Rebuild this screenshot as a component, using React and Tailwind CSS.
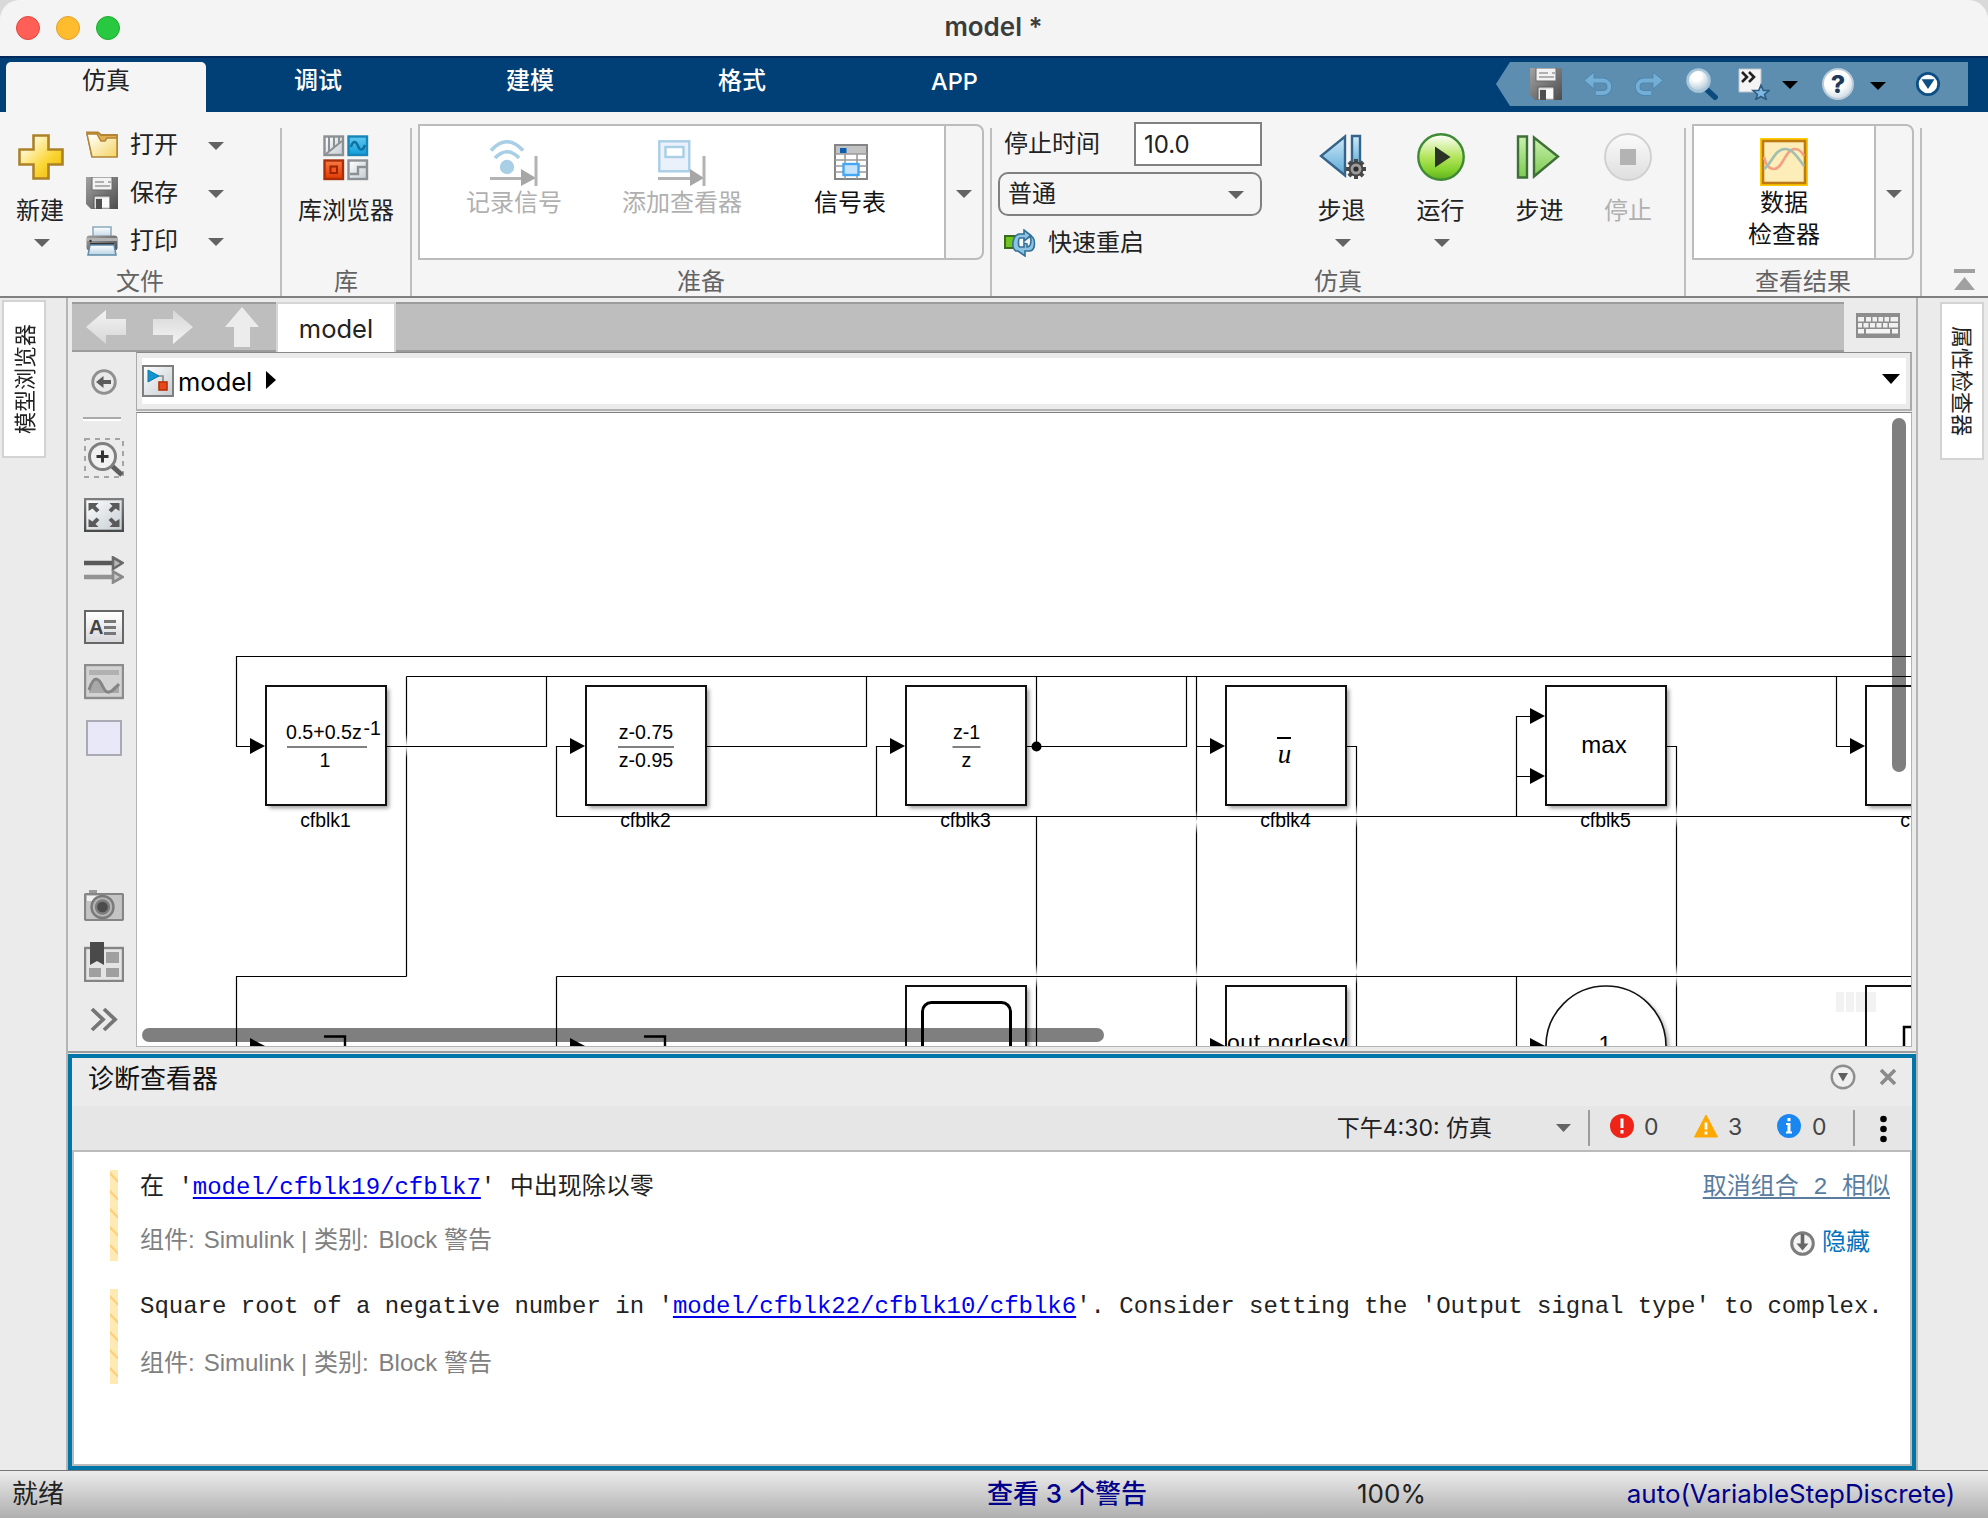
import React from "react";

const UI = "font-['Inter','Noto_Sans_CJK_SC',sans-serif]";

/* ---------- small helpers ---------- */
function Label({ className = "", children }) {
  return <div className={`flex h-7 items-center justify-center whitespace-nowrap leading-7 ${className}`}>{children}</div>;
}
function Caret({ className = "", color = "#636363", w = 16, h = 8 }) {
  return (
    <svg className={`shrink-0 ${className}`} width={w} height={h} viewBox="0 0 16 8" preserveAspectRatio="none">
      <path d="M0 0H16L8 8Z" fill={color} />
    </svg>
  );
}

/* ---------- icons ---------- */
function Defs() {
  return (
    <svg width="0" height="0" className="absolute">
      <defs>
        <linearGradient id="gold" x1="0" y1="0" x2="1" y2="1">
          <stop offset="0.15" stopColor="#fffbe8" />
          <stop offset="0.6" stopColor="#fbd737" />
          <stop offset="1" stopColor="#e8b200" />
        </linearGradient>
        <linearGradient id="folder" x1="0" y1="0" x2="1" y2="1">
          <stop offset="0.1" stopColor="#fffef5" />
          <stop offset="1" stopColor="#f3d35e" />
        </linearGradient>
        <linearGradient id="steel" x1="0" y1="0" x2="1" y2="1">
          <stop offset="0" stopColor="#a2a2a2" />
          <stop offset="1" stopColor="#4c4c4c" />
        </linearGradient>
        <linearGradient id="silver" x1="0" y1="0" x2="1" y2="1">
          <stop offset="0" stopColor="#ffffff" />
          <stop offset="1" stopColor="#c4ccd2" />
        </linearGradient>
        <linearGradient id="paper" x1="0" y1="0" x2="0" y2="1">
          <stop offset="0" stopColor="#ffffff" />
          <stop offset="1" stopColor="#b9d3e4" />
        </linearGradient>
        <linearGradient id="cyan" x1="0" y1="0" x2="0" y2="1">
          <stop offset="0" stopColor="#62c8f0" />
          <stop offset="1" stopColor="#0d9ddb" />
        </linearGradient>
        <linearGradient id="orange" x1="0" y1="0" x2="0" y2="1">
          <stop offset="0" stopColor="#f97a45" />
          <stop offset="1" stopColor="#e03a00" />
        </linearGradient>
        <linearGradient id="sky" x1="0" y1="0" x2="0" y2="1">
          <stop offset="0" stopColor="#cfe9f8" />
          <stop offset="1" stopColor="#5ba9d6" />
        </linearGradient>
        <linearGradient id="lime" x1="0" y1="0" x2="0" y2="1">
          <stop offset="0" stopColor="#c9f0b0" />
          <stop offset="1" stopColor="#7dcb50" />
        </linearGradient>
        <linearGradient id="run" x1="0" y1="0" x2="0" y2="1">
          <stop offset="0" stopColor="#ffffff" />
          <stop offset="0.5" stopColor="#b4e55c" />
          <stop offset="0.8" stopColor="#82d02c" />
          <stop offset="1" stopColor="#5fae20" />
        </linearGradient>
        <linearGradient id="stopg" x1="0" y1="0" x2="0" y2="1">
          <stop offset="0" stopColor="#fbfbfb" />
          <stop offset="1" stopColor="#dedede" />
        </linearGradient>
        <linearGradient id="ghost" x1="0" y1="0" x2="0" y2="1">
          <stop offset="0" stopColor="#f4f4f4" />
          <stop offset="1" stopColor="#d6d6d6" />
        </linearGradient>
        <linearGradient id="frame" x1="0" y1="0" x2="0" y2="1">
          <stop offset="0" stopColor="#7d7d7d" />
          <stop offset="1" stopColor="#4a4a4a" />
        </linearGradient>
        <linearGradient id="fade" x1="0" y1="0" x2="0" y2="1">
          <stop offset="0" stopColor="#fff" stopOpacity="0" />
          <stop offset="0.5" stopColor="#fff" />
          <stop offset="1" stopColor="#fff" stopOpacity="0" />
        </linearGradient>
        <radialGradient id="ball" cx="0.4" cy="0.3" r="0.75">
          <stop offset="0.3" stopColor="#ffffff" />
          <stop offset="1" stopColor="#a9c0d0" />
        </radialGradient>
      </defs>
    </svg>
  );
}

const PlusIcon = () => (
  <svg width="46" height="46" viewBox="0 0 46 46">
    <path d="M15.500 1.500h15v14h14v15h-14v14h-15v-14h-14v-15h14z" fill="url(#gold)" stroke="#ad8126" strokeWidth="2.600" />
  </svg>
);
const FolderIcon = () => (
  <svg width="32" height="28" viewBox="0 0 32 28">
    <path d="M1 1.500h11l3 2.500h16v21H6z" fill="#e0ae52" stroke="#b28434" strokeWidth="1.800" />
    <path d="M1 3h10l4 7h4l2-3h10v19H6z" fill="url(#folder)" stroke="#b28434" strokeWidth="1.500" />
  </svg>
);
const SaveIcon = () => (
  <svg width="32" height="32" viewBox="0 0 32 32">
    <path d="M0 0h32v32H5l-5-5z" fill="url(#steel)" />
    <path d="M6 0h20v13H6z" fill="#f2f2f2" stroke="#6a6a6a" />
    <path d="M9 5h9M9 9h15M22 5h3" stroke="#9a9a9a" strokeWidth="1.600" />
    <path d="M8 19h16v13H8z" fill="#dedede" stroke="#5a5a5a" />
    <path d="M10 22h6v10h-6z" fill="#4f4f4f" />
    <path d="M16 21h7v9h-7z" fill="#fafafa" />
  </svg>
);
const PrintIcon = () => (
  <svg width="32" height="30" viewBox="0 0 32 30">
    <path d="M7 1h18v11H7z" fill="url(#paper)" stroke="#8ba9bd" strokeWidth="1.500" />
    <rect x="0.500" y="9.500" width="31" height="15" rx="3" fill="url(#steel)" />
    <path d="M1 12h30v3H1z" fill="#b4b4b4" />
    <path d="M4 18h24" stroke="#333" strokeWidth="2" />
    <path d="M4 19h24l2 10H2z" fill="url(#paper)" stroke="#5e8cab" strokeWidth="1.500" />
    <circle cx="4.500" cy="15" r="1.200" fill="#333" />
  </svg>
);
const LibraryIcon = () => (
  <svg width="46" height="46" viewBox="0 0 46 46">
    <rect x="1.500" y="1.500" width="18.500" height="18.500" fill="url(#silver)" stroke="#8b9095" strokeWidth="2.400" />
    <path d="M6 2v15M11 2v10M16 2v6M3 19L19 6" stroke="#8b9095" strokeWidth="2" fill="none" />
    <rect x="25.500" y="1.500" width="18.500" height="18.500" fill="url(#cyan)" stroke="#1785b8" strokeWidth="2.400" />
    <path d="M28 12c2-7 5-6 7-1s5 5 7-1" stroke="#0f6f9f" strokeWidth="2.400" fill="none" />
    <rect x="1.500" y="25.500" width="18.500" height="18.500" fill="url(#orange)" stroke="#a92f08" strokeWidth="2.400" />
    <rect x="7.500" y="31.500" width="6.500" height="6.500" fill="#f4571f" stroke="#9c2402" strokeWidth="2" />
    <rect x="25.500" y="25.500" width="18.500" height="18.500" fill="url(#silver)" stroke="#8b9095" strokeWidth="2.400" />
    <path d="M27 39h8v-7h8" stroke="#8b9095" strokeWidth="2.400" fill="none" />
  </svg>
);
const LogSignalIcon = () => (
  <svg width="48" height="46" viewBox="0 0 48 46">
    <path d="M1 10.500Q17-7 33 10.500M5 18Q17 5.500 29 18" fill="none" stroke="#a9cfe6" strokeWidth="3.600" />
    <circle cx="17" cy="27" r="7.200" fill="#a9cfe6" />
    <path d="M0 38.500h32" stroke="#b3b3b3" strokeWidth="2.800" />
    <path d="M31 29l15 9-15 8z" fill="#a6a6a6" />
    <path d="M46 16v30" stroke="#b3b3b3" strokeWidth="3" />
  </svg>
);
const AddViewerIcon = () => (
  <svg width="48" height="46" viewBox="0 0 48 46">
    <rect x="1.300" y="1.300" width="30" height="30" fill="#eaf1fa" stroke="#a9cfe6" strokeWidth="2.400" />
    <rect x="7.500" y="7" width="18" height="10" fill="#fff" stroke="#a9cfe6" strokeWidth="2.400" />
    <path d="M0 38.500h32" stroke="#b3b3b3" strokeWidth="2.800" />
    <path d="M32 29l14 9-14 8z" fill="#a6a6a6" />
    <path d="M46 16v30" stroke="#b3b3b3" strokeWidth="3" />
  </svg>
);
const SignalTableIcon = () => (
  <svg width="34" height="36" viewBox="0 0 34 36">
    <rect x="1" y="1" width="32" height="34" fill="#fff" stroke="#858585" strokeWidth="2" />
    <path d="M2 2h30v8H2z" fill="#c3c3c3" />
    <path d="M1 10h32M1 16h32M1 22h32M1 28h32M11 10v25M23 10v25" stroke="#9b9b9b" strokeWidth="1.600" />
    <rect x="6" y="4" width="6.500" height="5" fill="#0b5fb0" />
    <rect x="9.500" y="20" width="15" height="11" fill="#c4e3fb" stroke="#45a6f5" strokeWidth="2.400" />
  </svg>
);
const FastRestartIcon = () => (
  <svg width="33" height="28" viewBox="0 0 33 28">
    <path d="M1 7h11v12H1z" fill="#6fc41e" stroke="#3a6b1c" strokeWidth="2" />
    <path d="M15 5h5V1l7 5.500-7 5.500V9h-4c-2 0-2 9 0 9h4v-4l3 1v3c3 0 4-2 4-7l-1-4c6 1 6 14 0 15h-5v5l-7-5h-2c-5-3-4-15 3-17z" fill="#8cc3e2" stroke="#336f97" strokeWidth="1.600" />
  </svg>
);
const Gear = ({ cx, cy }) => (
  <g transform={`translate(${cx} ${cy})`}>
    {[0, 45, 90, 135, 180, 225, 270, 315].map((a) => (
      <rect key={a} x="-2" y="-10" width="4" height="5" fill="#4a4a4a" transform={`rotate(${a})`} />
    ))}
    <circle r="6.500" fill="#9d9d9d" stroke="#444" strokeWidth="2" />
    <circle r="2.600" fill="#2c2c2c" />
  </g>
);
const StepBackIcon = () => (
  <svg className="ml-[3px]" width="48" height="46" viewBox="0 0 48 46">
    <path d="M26 2.500v39L2 22z" fill="url(#sky)" stroke="#35648a" strokeWidth="2.400" />
    <path d="M33 2h8v32h-8z" fill="url(#sky)" stroke="#35648a" strokeWidth="2.400" />
    <Gear cx={37} cy={35} />
  </svg>
);
const RunIcon = () => (
  <svg className="ml-px" width="48" height="48" viewBox="0 0 48 48">
    <circle cx="24" cy="24" r="22.700" fill="url(#run)" stroke="#3f8a35" strokeWidth="2.400" />
    <path d="M18 13.500v21L33.500 24z" fill="#2b3326" />
  </svg>
);
const StepForwardIcon = () => (
  <svg className="-ml-[3px]" width="44" height="44" viewBox="0 0 44 44">
    <path d="M2 1.500h9v41H2z" fill="url(#lime)" stroke="#3e6f36" strokeWidth="2.400" />
    <path d="M18 2.500v39l24-20z" fill="url(#lime)" stroke="#3e6f36" strokeWidth="2.400" />
  </svg>
);
const StopIcon = () => (
  <svg width="48" height="48" viewBox="0 0 48 48">
    <circle cx="24" cy="24" r="23" fill="url(#stopg)" stroke="#cfcfcf" strokeWidth="1.800" />
    <path d="M16 16h16v16H16z" fill="#b3b3b3" />
  </svg>
);
const InspectorIcon = () => (
  <svg width="48" height="48" viewBox="0 0 48 48">
    <rect width="48" height="48" fill="#fc0" />
    <rect x="3" y="3" width="42" height="42" fill="#fdedb8" stroke="#c07a14" strokeWidth="2.600" />
    <path d="M4 19c2 9 5 12 10 12 9 0 11-20 21-20 4 0 7 3 9 7" fill="none" stroke="#f2a184" strokeWidth="2.600" />
    <path d="M4 31C12 25 15 11 25 11c8 0 13 9 19 17" fill="none" stroke="#9fbfb0" strokeWidth="2.600" />
  </svg>
);
const UndoIcon = ({ flip }) => (
  <svg width="31" height="26" viewBox="0 0 31 26">
    <g transform={flip ? "translate(31 0) scale(-1 1)" : undefined}>
      <path d="M8 9.500h12c8.500 0 8.500 12.500 0 12.500h-7" fill="none" stroke="#4a87b1" strokeWidth="6" />
      <path d="M1 9.500L11 1v17z" fill="#74aed4" stroke="#4a87b1" />
      <path d="M8 9.500h12c8.500 0 8.500 12.500 0 12.500h-7" fill="none" stroke="#74aed4" strokeWidth="3.800" />
    </g>
  </svg>
);
const SearchIcon = () => (
  <svg width="32" height="32" viewBox="0 0 32 32">
    <path d="M19 20l12 11" stroke="#0a4a7d" strokeWidth="5.500" />
    <circle cx="12.500" cy="12.500" r="11" fill="url(#ball)" stroke="#a8c6da" strokeWidth="2.600" />
  </svg>
);
const FavoritesIcon = () => (
  <svg width="32" height="32" viewBox="0 0 32 32">
    <path d="M1 1h22v23H1z" fill="#f4f4f4" stroke="#b9c4cc" />
    <path d="M4 4l5 5-5 5M11 4l5 5-5 5" fill="none" stroke="#222" strokeWidth="2.600" />
    <path d="M23 17l2.300 5.500H31l-4.500 4 1.800 5L23 28.500 17.700 31.500l1.800-5-4.500-4h5.700z" fill="#7fb8e0" stroke="#2c5e84" strokeWidth="1.600" />
  </svg>
);
const HelpIcon = () => (
  <div className="flex h-8 w-8 items-center justify-center rounded-full border-2 border-[#b9cbd8] bg-[radial-gradient(circle_at_40%_30%,#ffffff_45%,#b3c8d6)] text-[25px] leading-none font-extrabold text-[#1f3a5c]">
    ?
  </div>
);
const CircleDownIcon = () => (
  <svg width="26" height="26" viewBox="0 0 28 28">
    <circle cx="14" cy="14" r="11.500" fill="#fff" stroke="#0b4f84" strokeWidth="3" />
    <path d="M7 9h14l-7 10.500z" fill="#0b4f84" />
  </svg>
);

/* ---------- top chrome ---------- */
function TitleBar() {
  return (
    <div className="flex h-14 items-center bg-[#f4f4f4]">
      <div className="flex w-[300px] gap-4 pl-4">
        <span className="h-6 w-6 rounded-full border border-[#e2453d] bg-[#ff5f57]" />
        <span className="h-6 w-6 rounded-full border border-[#e0a028] bg-[#febc2e]" />
        <span className="h-6 w-6 rounded-full border border-[#1eab2f] bg-[#28c840]" />
      </div>
      <div className="flex-1 pb-[3px] text-center text-[26px] leading-none font-semibold text-[#3c3c3c]">model *</div>
      <div className="w-[301px]" />
    </div>
  );
}

function TabStrip() {
  return (
    <div className="flex h-14 border-t-2 border-[#002a5c] bg-[#004076] pt-1">
      <div className="ml-1.5 w-[200px] rounded-t-[5px] bg-[#f5f5f5] text-center text-2xl leading-[37px] text-[#222]">仿真</div>
      <div className="flex text-2xl leading-[37px] font-medium text-white">
        <div className="w-[224px] text-center">调试</div>
        <div className="w-[200px] text-center">建模</div>
        <div className="w-[224px] text-center">格式</div>
        <div className="w-[201px] pt-px text-center text-[23.500px]">APP</div>
      </div>
      <div className="ml-auto mr-5 flex h-11 w-[472px] items-center bg-[#5d8eb0] pl-[34px] [clip-path:polygon(14px_0,100%_0,100%_100%,14px_100%,0_50%)]">
        <SaveIcon />
        <div className="ml-[21px]"><UndoIcon /></div>
        <div className="ml-[19px]"><UndoIcon flip /></div>
        <div className="ml-[22px]"><SearchIcon /></div>
        <div className="ml-5"><FavoritesIcon /></div>
        <Caret className="ml-3 mt-0.5" color="#000" />
        <div className="ml-6"><HelpIcon /></div>
        <Caret className="ml-4 mt-1" color="#000" />
        <div className="ml-[29px]"><CircleDownIcon /></div>
      </div>
    </div>
  );
}

/* ---------- ribbon ---------- */
function Section({ className = "", label, children }) {
  return (
    <div className={`mt-4 flex h-[168px] shrink-0 flex-col border-r-2 border-[#bfbfbf] ${className}`}>
      <div className="flex h-[141px]">{children}</div>
      <Label className="text-2xl text-[#636363]">{label}</Label>
    </div>
  );
}
function FileRow({ icon, text }) {
  return (
    <div className="flex h-12 items-center">
      <div className="w-8">{icon}</div>
      <Label className="ml-3 text-2xl text-[#222]">{text}</Label>
      <Caret className="ml-[30px] mt-0.5" />
    </div>
  );
}
function GalleryItem({ icon, text, muted }) {
  return (
    <div className="flex w-[168px] flex-col items-center pt-[14px]">
      <div className="flex h-[49px] items-start justify-center">{icon}</div>
      <Label className={muted ? "text-2xl text-[#b0b0b0]" : "text-2xl text-[#111]"}>{text}</Label>
    </div>
  );
}
function SimButton({ className, icon, text, muted, caret }) {
  return (
    <div className={`flex flex-col items-center ${className}`}>
      <div className="mt-[5px] flex h-12 items-center">{icon}</div>
      <Label className={`mt-4 text-2xl ${muted ? "text-[#b0b0b0]" : "text-[#222]"}`}>{text}</Label>
      {caret && <Caret className="mt-[14px] ml-[3px]" />}
    </div>
  );
}

function Ribbon() {
  return (
    <div className="flex h-[186px] border-b-2 border-[#808080] bg-[#f5f5f5]">
      <Section className="w-[282px]" label="文件">
        <div className="flex w-[86px] flex-col items-center pr-1 pt-1.5">
          <PlusIcon />
          <Label className="mt-[17px] mr-0.5 text-2xl text-[#222]">新建</Label>
          <Caret className="mt-[14px] ml-0.5" />
        </div>
        <div className="-mt-[7px]">
          <FileRow icon={<FolderIcon />} text="打开" />
          <FileRow icon={<SaveIcon />} text="保存" />
          <FileRow icon={<PrintIcon />} text="打印" />
        </div>
      </Section>
      <Section className="w-[130px]" label="库">
        <div className="flex w-full flex-col items-center pt-[7px]">
          <LibraryIcon />
          <Label className="mt-4 text-2xl text-[#222]">库浏览器</Label>
        </div>
      </Section>
      <Section className="w-[580px]" label="准备">
        <div className="-mt-1 ml-1.5 flex h-[136px] w-[566px] overflow-hidden rounded-r-lg border-2 border-[#bcbcbc]">
          <div className="flex w-[526px] border-r-2 border-[#bcbcbc] bg-white pl-2.5">
            <GalleryItem muted text="记录信号" icon={<LogSignalIcon />} />
            <GalleryItem muted text="添加查看器" icon={<AddViewerIcon />} />
            <GalleryItem text="信号表" icon={<div className="pt-1 pl-px"><SignalTableIcon /></div>} />
          </div>
          <div className="flex flex-1 items-center justify-center pt-1 pr-px"><Caret /></div>
        </div>
      </Section>
      <Section className="w-[694px]" label="仿真">
        <div className="ml-1.5 -mt-1.5 w-[264px] text-2xl text-[#222]">
          <div className="flex h-11 items-center pl-1.5">
            <Label>停止时间</Label>
            <div className="ml-auto h-11 w-32 border-2 border-[#808080] bg-white pl-2 leading-[41px]">10.0</div>
          </div>
          <div className="mt-1.5 flex h-11 items-center justify-between rounded-[10px] border-2 border-[#808080] pl-2 pr-4">
            <Label>普通</Label>
            <Caret className="mt-0.5" />
          </div>
          <div className="mt-[13px] flex items-center pl-1.5">
            <FastRestartIcon />
            <Label className="ml-[11px]">快速重启</Label>
          </div>
        </div>
        <div className="ml-[30px] flex">
          <SimButton className="w-[99px]" icon={<StepBackIcon />} text="步退" caret />
          <SimButton className="w-[99px]" icon={<RunIcon />} text="运行" caret />
          <SimButton className="w-[99px]" icon={<StepForwardIcon />} text="步进" />
          <SimButton className="w-[78px]" icon={<StopIcon />} text="停止" muted />
        </div>
      </Section>
      <Section className="w-[236px]" label="查看结果">
        <div className="-mt-1 ml-1.5 flex h-[136px] w-[222px] overflow-hidden rounded-r-lg border-2 border-[#bcbcbc]">
          <div className="flex w-[182px] flex-col items-center border-r-2 border-[#bcbcbc] bg-white pt-3 text-2xl leading-8 text-[#111]">
            <InspectorIcon />
            <div className="mt-px text-center">数据<br />检查器</div>
          </div>
          <div className="flex flex-1 items-center justify-center pt-1"><Caret /></div>
        </div>
      </Section>
      <svg className="mt-[157px] ml-8" width="21" height="22" viewBox="0 0 21 22">
        <path d="M0 0h21v4H0zM10.500 8L21 21H0z" fill="#a0a0a0" />
      </svg>
    </div>
  );
}

/* ---------- editor ---------- */
function NavArrow({ rotate = 0, className = "" }) {
  return (
    <svg className={className} width="42" height="36" viewBox="0 0 42 36" overflow="visible">
      <g transform={`rotate(${rotate} 21 18)`}>
        <path d="M1 18L21 1v9h20v16H21v9z" fill={rotate === 90 ? "#ececec" : "url(#ghost)"} />
      </g>
    </svg>
  );
}

function EditorTabs() {
  return (
    <div className="mt-1 flex h-[50px]">
      <div className="flex w-[1772px] border-y-2 border-[#9c9c9c] bg-[#bebebe]">
        <div className="flex w-[204px] items-center pl-[13px]">
          <NavArrow />
          <NavArrow rotate={180} className="ml-[25px]" />
          <NavArrow rotate={90} className="ml-[27px]" />
        </div>
        <div className="-my-0.5 w-[120px] border-x-2 border-t-2 border-[#d6d6d6] bg-white text-center text-[25.500px] leading-[49px] text-[#222]">model</div>
      </div>
      <svg className="ml-3 mt-[11px]" width="44" height="25" viewBox="0 0 44 25">
        <rect width="44" height="25" fill="#8d8d8d" />
        <path d="M2 4h6v4.500H2zM10 4h5v4.500h-5zM16.500 4h4.500v4.500h-4.500zM22.500 4h4.500v4.500h-4.500zM28.500 4h4.500v4.500h-4.500zM34.500 4h7.500v4.500h-7.500z" fill="#f1f1f1" />
        <path d="M2 10h4v4.500H2zM7.500 10h5v4.500h-5zM14 10h5v4.500h-5zM20.500 10h5v4.500h-5zM27 10h4.500v4.500H27zM33 10h9v4.500h-9z" fill="#f1f1f1" />
        <path d="M2 16h6v4.500H2zM10 16h24v4.500H10zM36 16h6v4.500h-6z" fill="#f4f4f4" />
      </svg>
    </div>
  );
}

function Palette() {
  return (
    <div className="flex w-[64px] shrink-0 flex-col items-center">
      <svg className="mt-[17px]" width="26" height="26" viewBox="0 0 26 26">
        <circle cx="13" cy="13" r="11.300" fill="#e9e9e9" stroke="#8f8f8f" strokeWidth="2.800" />
        <path d="M5 13L12.500 7v4H20v4h-7.500v4z" fill="#5c5c5c" />
      </svg>
      <div className="mt-[22px] mr-1 h-1 w-[38px] border-t-2 border-b-2 border-t-[#aaa] border-b-white" />
      <svg className="mt-[17px]" width="40" height="40" viewBox="0 0 40 40">
        <rect x="1" y="1" width="38" height="38" fill="none" stroke="#a5a5a5" strokeWidth="2" strokeDasharray="5 5" />
        <path d="M27 27l11 10" stroke="#5e5e5e" strokeWidth="5" />
        <circle cx="18.500" cy="18.500" r="13" fill="#f1f1f1" stroke="#7f7f7f" strokeWidth="3" />
        <path d="M12.500 18.500h12M18.500 12.500v12" stroke="#333" strokeWidth="3" />
      </svg>
      <svg className="mt-5" width="40" height="34" viewBox="0 0 40 34">
        <rect x="1" y="1" width="38" height="32" fill="url(#silver)" stroke="url(#frame)" strokeWidth="2.600" />
        <path d="M4.500 5h10l-3 3 4 4-3 2.500-4-4-4 2.500zM35.500 5h-10l3 3-4 4 3 2.500 4-4 4 2.500zM4.500 29h10l-3-3 4-4-3-2.500-4 4-4-2.500zM35.500 29h-10l3-3-4-4 3-2.500 4 4 4-2.500z" fill="#5a5a5a" />
      </svg>
      <svg className="mt-6" width="40" height="28" viewBox="0 0 40 28">
        <path d="M0 7h30" stroke="#5a5a5a" strokeWidth="4.500" />
        <path d="M0 21h30" stroke="#939393" strokeWidth="4.500" />
        <path d="M29 1.500l9.500 5.500-9.500 6z" fill="#b9b9b9" stroke="#6a6a6a" strokeWidth="2.600" />
        <path d="M29 15.500l9.500 5.500-9.500 5.500z" fill="#cacaca" stroke="#8a8a8a" strokeWidth="2.600" />
      </svg>
      <div className="mt-[26px] flex h-[34px] w-10 items-start gap-px border-2 border-[#666] bg-gradient-to-b from-white to-[#d8d8dc] pl-[3px] pt-[5px]">
        <span className="font-['Liberation_Sans'] text-[20px] leading-5 font-bold text-[#444]">A</span>
        <span className="mt-[3px] h-[15px] w-3 border-y-[3px] border-[#777] bg-[linear-gradient(transparent_3px,#777_3px,#777_6px,transparent_6px)]" />
      </div>
      <svg className="mt-5" width="40" height="36" viewBox="0 0 40 36">
        <rect x="1" y="1" width="38" height="33" fill="#d2d2d2" stroke="#8c8c8c" strokeWidth="2.400" />
        <path d="M5 6h30v5H5z" fill="#b1b1b1" />
        <path d="M5 24c5-14 10-12 14-2s8 4 11 0l5-2v9H5z" fill="#a8a8a8" />
        <path d="M5 26c5-16 10-12 14-3s9 5 16-3" fill="none" stroke="#848484" strokeWidth="3" />
      </svg>
      <div className="mt-5 h-9 w-9 border-2 border-[#aaaab4] bg-[#e8e8f8]" />
      <svg className="mt-[134px]" width="40" height="32" viewBox="0 0 40 32">
        <path d="M5 0h8v4H5z" fill="#9a9a9a" />
        <rect x="1" y="4" width="38" height="26" rx="1" fill="#c4c4c4" stroke="#858585" strokeWidth="2.200" />
        <path d="M3 6h12v5H3z" fill="#f0f0f0" />
        <circle cx="18.500" cy="17" r="11" fill="#b5b5b5" stroke="#7a7a7a" strokeWidth="2.400" />
        <circle cx="18.500" cy="17" r="6.500" fill="#4c4c4c" stroke="#7c7c7c" strokeWidth="2.400" />
      </svg>
      <svg className="mt-5" width="40" height="40" viewBox="0 0 40 40">
        <rect x="1" y="6" width="38" height="33" fill="#e4e4e4" stroke="#848484" strokeWidth="2.400" />
        <path d="M22 10h13v11H22zM5 26h12v9H5zM22 26h13v9H22z" fill="#a0a0a0" />
        <path d="M6 0h14v23l-7-4-7 4z" fill="#4a4a4a" />
      </svg>
      <svg className="mt-[25px]" width="28" height="25" viewBox="0 0 28 25">
        <path d="M2 2l11 10.500L2 23M14 2l11 10.500L14 23" fill="none" stroke="#757575" strokeWidth="3.800" />
      </svg>
    </div>
  );
}

function Breadcrumb() {
  return (
    <div className="h-[59px] border-t border-r-2 border-b-2 border-l border-t-[#888] border-r-[#aaa] border-b-[#b3b3b3] border-l-[#aaa] py-[5px] pr-1 pl-[5px]">
      <div className="flex h-full items-center bg-white">
        <svg width="32" height="32" viewBox="0 0 32 32">
          <rect x="1" y="1" width="30" height="30" fill="url(#silver)" stroke="#7e7e7e" strokeWidth="2" />
          <path d="M15 11h6v8" fill="none" stroke="#888" strokeWidth="1.600" />
          <path d="M6 5l11 6-11 6z" fill="#1494cf" stroke="#0d79ac" />
          <rect x="17" y="17" width="8" height="8" fill="#e64a19" stroke="#b93204" strokeWidth="1.600" />
        </svg>
        <span className="ml-1 pt-0.5 text-[25.500px] leading-none text-black">model</span>
        <svg className="ml-[14px] -mt-0.5" width="10" height="18" viewBox="0 0 10 18"><path d="M0 0v18l10-9z" /></svg>
        <Caret className="ml-auto mr-1.5 -mt-1" color="#000" w={18} h={10} />
      </div>
    </div>
  );
}

/* ---------- block diagram ---------- */
function Block({ x, y = 686, name, children, h = 119 }) {
  return (
    <g>
      <rect x={x + 3} y={y + 3} width="120" height={h} fill="#000" opacity="0.4" filter="url(#soft)" />
      <rect x={x} y={y} width="120" height={h} fill="#fff" stroke="#111" strokeWidth="2" />
      {children}
      {name && <text x={x + 59.500} y="827" fontSize="19.400" textAnchor="middle">{name}</text>}
    </g>
  );
}
const Head = ({ x, y }) => <path d={`M${x} ${y - 8}l15 8-15 8z`} />;
function Fraction({ cx, top, bottom, w }) {
  return (
    <g fontSize="19.600" textAnchor="middle">
      <text x={cx} y="739">{top}</text>
      <path d={`M${cx - w / 2} 747h${w}`} stroke="#808080" strokeWidth="2" />
      <text x={cx} y="767">{bottom}</text>
    </g>
  );
}

function Diagram() {
  const fades = [[406, 746], [1036, 976], [1196, 822], [1196, 976], [1356, 816], [1356, 972], [1676, 816], [1676, 976]];
  return (
    <svg width="1774" height="633" viewBox="137 413 1774 633" fontFamily="'Liberation Sans', Arial, sans-serif">
      <defs>
        <filter id="soft" x="-10%" y="-10%" width="125%" height="125%"><feGaussianBlur stdDeviation="2" /></filter>
      </defs>
      <g fill="none" stroke="#000" strokeWidth="1.200">
        <path d="M406.500 676.500V976.500M236.500 976.500V1046M556.500 976.500V1046M1516.500 976.500V1046" />
        <path d="M1036.500 676.500V746M1036.500 816V1046M1196.500 676.500V1046M1346 746.500h10.500V1046M1666 746.500h10.500V1046" />
      </g>
      {fades.map(([x, y]) => (
        <rect key={`${x}-${y}`} x={x - 2} y={y - 12} width="5" height="24" fill="url(#fade)" />
      ))}
      <g fill="none" stroke="#000" strokeWidth="1.200">
        <path d="M1911 656.500H236.500V746.500H252" />
        <path d="M1911 676.500H406.500M387 746.500H546.500V676.500M707 746.500H866.500V676.500M1027 746.500H1186.500V676.500" />
        <path d="M572 746.500H556.500V816.500H1911M876.500 816.500V746.500H892M1196.500 746.500H1212" />
        <path d="M1516.500 816.500V716.500H1532M1516.500 776.500H1532M1836.500 676.500V746.500H1852" />
        <path d="M236 976.500H406.500M556.500 976.500H1911" />
      </g>
      <circle cx="1036.500" cy="746.500" r="5" />
      <Block x={266} name="cfblk1">
        <text x="286" y="739" fontSize="19.600">0.5+0.5z</text>
        <text x="363.500" y="734.500" fontSize="19.500">-1</text>
        <path d="M287 747h80" stroke="#808080" strokeWidth="2" />
        <text x="325" y="767" fontSize="19.600" textAnchor="middle">1</text>
      </Block>
      <Block x={586} name="cfblk2"><Fraction cx={646} w={56} top="z-0.75" bottom="z-0.95" /></Block>
      <Block x={906} name="cfblk3"><Fraction cx={966.500} w={28} top="z-1" bottom="z" /></Block>
      <Block x={1226} name="cfblk4">
        <path d="M1277 738h14" stroke="#000" strokeWidth="2" />
        <text x="1284.500" y="763" fontSize="27" fontStyle="italic" textAnchor="middle" fontFamily="'Liberation Serif', serif">u</text>
      </Block>
      <Block x={1546} name="cfblk5"><text x="1604" y="753" fontSize="24" textAnchor="middle">max</text></Block>
      <Block x={1866} name="cfblk6" />
      <Block x={906} y={986}><rect x="922.500" y="1002.500" width="88" height="80" rx="9" fill="#fff" stroke="#000" strokeWidth="3" /></Block>
      <Block x={1226} y={986}><text x="1286" y="1051" fontSize="23" textAnchor="middle" textLength="118">out.nqrlesv</text></Block>
      <circle cx="1609" cy="1049" r="60" opacity="0.35" filter="url(#soft)" />
      <circle cx="1606" cy="1046" r="60" fill="#fff" stroke="#111" strokeWidth="1.600" />
      <text x="1605" y="1053" fontSize="23" textAnchor="middle">1</text>
      <Block x={1866} y={986}><path d="M1911 1027h-7v30" fill="none" stroke="#000" strokeWidth="2.500" /></Block>
      <path d="M324 1036.500h21v20M644 1036.500h21v20" fill="none" stroke="#000" strokeWidth="2.400" />
      {[250, 570, 890, 1210].map((x) => <Head key={x} x={x} y={746} />)}
      <Head x={1530} y={716} />
      <Head x={1530} y={776} />
      <Head x={1850} y={746} />
      {[250, 570, 1210, 1530].map((x) => <Head key={`b${x}`} x={x} y={1046} />)}
      <path d="M1836 992h8v20h-8zM1846 992h8v20h-8zM1856 992h20v20h-20z" fill="#000" opacity="0.05" />
      <rect x="142" y="1028" width="962" height="14" rx="7" opacity="0.5" />
      <rect x="1892" y="418" width="14" height="354" rx="7" opacity="0.5" />
    </svg>
  );
}

/* ---------- diagnostic viewer ---------- */
const STRIPE = "bg-[repeating-linear-gradient(45deg,#ffeab3_0px,#ffeab3_9.500px,#ffce7a_10.500px,#ffce7a_11.700px,#ffeab3_12.700px)]";

function Meta() {
  return (
    <div className="flex h-7 items-center font-['Liberation_Sans','Noto_Sans_CJK_SC',sans-serif] text-2xl leading-7 whitespace-nowrap text-[#808080]">
      <span>组件:</span><span className="ml-[9px]">Simulink | 类别:</span><span className="ml-2.5">Block 警告</span>
    </div>
  );
}
const Link = ({ children }) => <a className="text-[#0000ee] underline decoration-2 underline-offset-[3px]">{children}</a>;

function Diagnostics() {
  return (
    <div className="h-[416px] border-4 border-[#0076a8]">
      <div className="flex h-12 items-center justify-between bg-[#ebebeb] pr-[15px] pl-4">
        <Label className="-mt-1.5 text-[26px] text-[#111]">诊断查看器</Label>
        <div className="-mt-2.5 flex items-center gap-[23px]">
          <svg width="26" height="26" viewBox="0 0 26 26">
            <circle cx="13" cy="13" r="11.300" fill="#efefef" stroke="#8e8e8e" strokeWidth="2.400" />
            <path d="M8 9h10l-5 8.500z" fill="#5e5e5e" />
          </svg>
          <svg width="18" height="18" viewBox="0 0 18 18"><path d="M2 2l14 14M16 2L2 16" stroke="#8a8a8a" strokeWidth="3.600" /></svg>
        </div>
      </div>
      <div className="flex h-[46px] items-center justify-end border-b-2 border-[#bbb] bg-[#e6e6e6] text-2xl text-[#222]">
        <Label className="mr-[64px] text-[23px]">下午4:30: 仿真</Label>
        <Caret w={15} />
        <div className="ml-[17px] h-9 w-0.5 bg-[#9c9c9c]" />
        <svg className="ml-5 -mt-1" width="24" height="24" viewBox="0 0 24 24">
          <circle cx="12" cy="12" r="12" fill="#ee2418" /><path d="M10.500 4.500h3v9.500h-3zM10.500 16h3v3.500h-3z" fill="#fff" />
        </svg>
        <span className="ml-2.5 w-[50px] -mt-0.5 leading-none text-[23px] text-[#444]">0</span>
        <svg className="-mt-1" width="24" height="24" viewBox="0 0 24 24">
          <path d="M12 1L23.500 23H.500z" fill="#ffa800" stroke="#ffa800" strokeLinejoin="round" /><path d="M10.600 8.500h2.800v7h-2.800zM10.600 17.500h2.800v3h-2.800z" fill="#fff" />
        </svg>
        <span className="ml-2.5 w-[49px] -mt-0.5 leading-none text-[23px] text-[#444]">3</span>
        <svg className="-mt-1" width="24" height="24" viewBox="0 0 24 24">
          <circle cx="12" cy="12" r="12" fill="#1a86f0" /><path d="M10.500 4h3v3.200h-3zM9 9h4.500v8.500H15v2H9v-2h1.500V11H9z" fill="#fff" />
        </svg>
        <span className="ml-[11px] w-[41px] -mt-0.5 leading-none text-[23px] text-[#444]">0</span>
        <div className="h-9 w-0.5 bg-[#9c9c9c]" />
        <svg className="mr-[25px] ml-[25px] mt-0.5" width="7" height="28" viewBox="0 0 7 28">
          <circle cx="3.500" cy="4" r="3.300" /><circle cx="3.500" cy="14" r="3.300" /><circle cx="3.500" cy="24" r="3.300" />
        </svg>
      </div>
      <div className="h-[314px] border-x-2 border-b-2 border-[#bbb] bg-white pt-[18px] pr-5 pl-9 font-['Liberation_Mono','Noto_Sans_CJK_SC',monospace] text-2xl text-[#222]">
        <div className="flex h-[91px]">
          <div className={`w-2 ${STRIPE}`} />
          <div className="ml-[22px] pt-1">
            <div className="flex h-7 items-center leading-7 whitespace-pre">
              <span>在 '<Link>model/cfblk19/cfblk7</Link>' 中出现除以零</span>
            </div>
            <div className="mt-6"><Meta /></div>
          </div>
          <div className="ml-auto flex flex-col items-end pt-1">
            <div className="h-7 leading-7 whitespace-pre text-[#5a7d9f] underline decoration-2 underline-offset-[3px]">取消组合 2 相似</div>
            <div className="mt-[27px] mr-5 flex items-center gap-[7px]">
              <svg width="25" height="25" viewBox="0 0 25 25">
                <circle cx="12.500" cy="12.500" r="10.800" fill="#f4f4f4" stroke="#7d7d7d" strokeWidth="3" />
                <path d="M12.500 3v13" stroke="#666" strokeWidth="3.600" />
                <path d="M6.500 12.500h12l-6 7z" fill="#666" />
              </svg>
              <Label className="pt-0.5 text-[#0072bd]">隐藏</Label>
            </div>
          </div>
        </div>
        <div className="mt-7 flex h-[95px]">
          <div className={`w-2 ${STRIPE}`} />
          <div className="ml-[22px] pt-1">
            <div className="h-7 leading-7 whitespace-pre">
              Square root of a negative number in '<Link>model/cfblk22/cfblk10/cfblk6</Link>'. Consider setting the 'Output signal type' to complex.
            </div>
            <div className="mt-7"><Meta /></div>
          </div>
        </div>
      </div>
    </div>
  );
}

function SideTab({ text, flip, className }) {
  return (
    <div className={`flex h-[158px] w-11 items-center justify-center border-2 border-[#d3d3d3] bg-white ${className}`}>
      <span className={`text-[22px] leading-none text-[#222] [writing-mode:vertical-rl] [text-orientation:sideways] ${flip ? "ml-0.5 rotate-180" : ""}`}>{text}</span>
    </div>
  );
}

export default function App() {
  return (
    <div className={`h-[1518px] w-[1988px] overflow-hidden bg-[#d9d9d9] ${UI}`}>
      <Defs />
      <div className="h-full overflow-hidden rounded-t-[20px] bg-[#ebebeb]">
        <TitleBar />
        <TabStrip />
        <Ribbon />
        <div className="flex h-[1172px]">
          <div className="w-[68px] border-r-2 border-[#b5b5b5]">
            <SideTab text="模型浏览器" flip className="mt-0.5 ml-0.5" />
          </div>
          <div className="flex w-[1848px] flex-col">
            <div className="ml-1"><EditorTabs /></div>
            <div className="ml-1 flex h-[695px]">
              <Palette />
              <div className="w-[1776px]">
                <Breadcrumb />
                <div className="mt-px h-[635px] border border-t-[#808080] border-[#b3b3b3] bg-white"><Diagram /></div>
              </div>
            </div>
            <div className="mt-[4px] mb-px h-0.5 bg-[#9c9c9c]" />
            <Diagnostics />
          </div>
          <div className="w-[72px] border-l-2 border-[#b5b5b5]">
            <SideTab text="属性检查器" className="mt-1 ml-[22px]" />
          </div>
        </div>
        <div className="flex h-12 items-center border-t border-[#777] bg-gradient-to-b from-[#ececec] to-[#afafaf] pb-0.5 text-[26px] text-[#222]">
          <Label className="ml-3 w-[52px]">就绪</Label>
          <Label className="ml-[923px] w-[160px] text-[26px] font-medium text-[#00008b]">查看 3 个警告</Label>
          <Label className="ml-[211px] w-[67px]">100%</Label>
          <Label className="ml-[203px] w-[326px] text-[25.900px] text-[#00008b]">auto(VariableStepDiscrete)</Label>
        </div>
      </div>
    </div>
  );
}
